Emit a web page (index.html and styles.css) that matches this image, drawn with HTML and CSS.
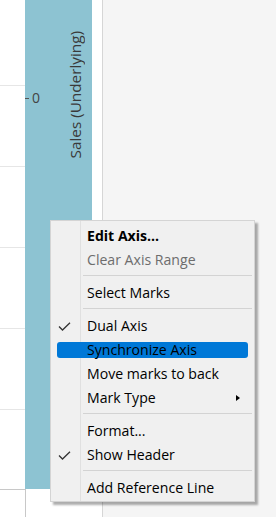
FILE: index.html
```html
<!DOCTYPE html>
<html>
<head>
<meta charset="utf-8">
<link rel="stylesheet" href="styles.css">
</head>
<body>
<div class="view">
  <div class="pane-left">
    <div class="cell first"></div>
    <div class="cell"></div>
    <div class="cell"></div>
    <div class="cell"></div>
    <div class="cell"></div>
    <div class="cell last"></div>
  </div>
  <div class="axis-col">
    <div class="axis-header">
      <div class="tick-row"><span class="tick"></span><span class="tick-label">0</span></div>
      <div class="axis-title">Sales (Underlying)</div>
    </div>
    <div class="axis-foot"></div>
  </div>
  <div class="pane-right"></div>
</div>

<div class="menu">
  <div class="item"><div class="row"><span class="check"></span><span class="text bold">Edit Axis...</span></div></div>
  <div class="item"><div class="row"><span class="check"></span><span class="text disabled">Clear Axis Range</span></div></div>
  <div class="sep"></div>
  <div class="item"><div class="row"><span class="check"></span><span class="text">Select Marks</span></div></div>
  <div class="sep"></div>
  <div class="item"><div class="row"><span class="check"><svg width="13" height="9" viewBox="0 0 13 9"><polyline points="1,4.5 4.5,8 12,0.8" fill="none" stroke="#333" stroke-width="1.3"/></svg></span><span class="text">Dual Axis</span></div></div>
  <div class="item active"><div class="row"><span class="check"></span><span class="text">Synchronize Axis</span></div></div>
  <div class="item"><div class="row"><span class="check"></span><span class="text">Move marks to back</span></div></div>
  <div class="item"><div class="row"><span class="check"></span><span class="text">Mark Type</span><span class="arrow"></span></div></div>
  <div class="sep"></div>
  <div class="item"><div class="row"><span class="check"></span><span class="text">Format...</span></div></div>
  <div class="item"><div class="row"><span class="check"><svg width="13" height="9" viewBox="0 0 13 9"><polyline points="1,4.5 4.5,8 12,0.8" fill="none" stroke="#333" stroke-width="1.3"/></svg></span><span class="text">Show Header</span></div></div>
  <div class="sep"></div>
  <div class="item"><div class="row"><span class="check"></span><span class="text">Add Reference Line</span></div></div>
</div>
</body>
</html>
```

FILE: styles.css
```css
html, body {
  margin: 0;
  padding: 0;
}
body {
  width: 276px;
  height: 517px;
  overflow: hidden;
  background: #f5f5f5;
  font-family: "Open Sans", "Noto Sans", sans-serif;
  position: relative;
}
.view {
  display: flex;
  height: 517px;
}
.pane-left {
  width: 25px;
  background: #ffffff;
  display: flex;
  flex-direction: column;
}
.cell {
  height: 80px;
  border-bottom: 1px solid #e6e6e6;
  flex: none;
}
.cell.first {
  height: 85px;
}
.cell.last {
  height: 79px;
  border-bottom-color: #c8c8c8;
}
.axis-col {
  width: 77px;
  display: flex;
  flex-direction: column;
  background: #ffffff;
  border-right: 1px solid #d6d6d6;
}
.axis-header {
  height: 489px;
  width: 67px;
  background: #8dc3d2;
  display: flex;
  align-items: flex-start;
  flex: none;
}
.tick-row {
  margin-top: 88px;
  display: flex;
  align-items: center;
  height: 20px;
}
.tick {
  width: 4px;
  height: 1px;
  background: #555;
}
.tick-label {
  margin-left: 3px;
  font-size: 14px;
  color: #444;
  line-height: 20px;
}
.axis-title {
  margin-top: 31px;
  margin-left: auto;
  margin-right: 8px;
  writing-mode: vertical-rl;
  transform: rotate(180deg);
  font-size: 15.3px;
  line-height: 18px;
  color: #3a3a3a;
  white-space: nowrap;
}
.axis-foot {
  flex: 1;
  border-left: 1px solid #c8c8c8;
}
.pane-right {
  flex: 1;
  background: #f5f5f5;
}

/* context menu overlay */
.menu {
  position: absolute;
  left: 50px;
  top: 220px;
  width: 203px;
  padding: 3px 0 1px;
  background: #f0f0f0 linear-gradient(to right, transparent 29px, #e0e0e0 29px, #e0e0e0 30px, transparent 30px);
  border: 1px solid #d4d4d4;
  box-shadow: 3px 3px 2px rgba(0, 0, 0, 0.32);
  display: flex;
  flex-direction: column;
  font-size: 14.1px;
  color: #000;
}
.item {
  padding: 4px 6px;
}
.row {
  display: flex;
  align-items: center;
  height: 16px;
  border-radius: 3px;
}
.item.active .row {
  background: #0078d7;
}
.check {
  width: 30px;
  flex: none;
  display: flex;
  align-items: center;
  padding-left: 1px;
  box-sizing: border-box;
}
.check svg {
  display: block;
}
.text {
  white-space: nowrap;
  line-height: 16px;
}
.bold {
  font-weight: 700;
}
.disabled {
  color: #6d6d6d;
}
.arrow {
  margin-left: auto;
  margin-right: 8px;
  width: 0;
  height: 0;
  border-top: 3.5px solid transparent;
  border-bottom: 3.5px solid transparent;
  border-left: 4px solid #000;
}
.sep {
  height: 1px;
  margin: 3px 2px 5px 32px;
  background: #d3d3d3;
}
```
